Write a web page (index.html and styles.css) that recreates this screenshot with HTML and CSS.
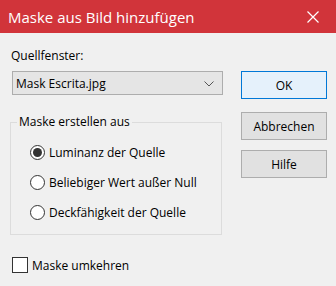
FILE: index.html
```html
<!DOCTYPE html>
<html lang="de">
<head>
<meta charset="utf-8">
<title>Maske aus Bild hinzufügen</title>
<link rel="stylesheet" href="styles.css">
</head>
<body>
<div class="dialog">
  <div class="titlebar">
    <span class="title">Maske aus Bild hinzufügen</span>
    <span class="close">
      <svg width="12" height="12" viewBox="0 0 12 12"><path d="M0.5 0.5 L11.5 11.5 M11.5 0.5 L0.5 11.5" stroke="#fff" stroke-width="1.2" fill="none"/></svg>
    </span>
  </div>
  <div class="main">
    <div class="left">
      <div class="label">Quellfenster:</div>
      <div class="select">
        <span>Mask Escrita.jpg</span>
        <svg class="chev" width="10" height="6" viewBox="0 0 10 6"><path d="M0.5 0.5 L5 5 L9.5 0.5" stroke="#555" stroke-width="1" fill="none"/></svg>
      </div>
      <fieldset class="group">
        <legend>Maske erstellen aus</legend>
        <div class="radio-row"><span class="radio checked"></span><span>Luminanz der Quelle</span></div>
        <div class="radio-row"><span class="radio"></span><span>Beliebiger Wert außer Null</span></div>
        <div class="radio-row"><span class="radio"></span><span>Deckfähigkeit der Quelle</span></div>
      </fieldset>
      <div class="check-row"><span class="checkbox"></span><span>Maske umkehren</span></div>
    </div>
    <div class="right">
      <div class="btn default">OK</div>
      <div class="btn b2">Abbrechen</div>
      <div class="btn b3">Hilfe</div>
    </div>
  </div>
</div>
</body>
</html>
```
FILE: styles.css
```css
html, body {
  margin: 0;
  padding: 0;
}
body {
  width: 336px;
  height: 286px;
  background: #f0f0f0;
  font-family: "Segoe UI", "Open Sans", "Noto Sans", sans-serif;
  font-size: 12px;
  color: #000;
  overflow: hidden;
}
.titlebar {
  height: 33px;
  background: #d1343a;
  color: #fff;
  display: flex;
  align-items: center;
  justify-content: space-between;
  padding-left: 8px;
}
.title {
  font-size: 15px;
  line-height: 20px;
}
.close {
  width: 46px;
  height: 33px;
  display: flex;
  align-items: center;
  justify-content: center;
}
.main {
  display: flex;
  padding: 15px 9px 0 10px;
}
.left {
  width: 213px;
}
.label {
  line-height: 16px;
  padding-left: 1px;
}
.select {
  margin: 7px 0 0 2px;
  width: 211px;
  height: 24px;
  box-sizing: border-box;
  border: 1px solid #adadad;
  background: #e5e5e5;
  display: flex;
  align-items: center;
  justify-content: space-between;
  padding: 0 8px 0 3px;
}
.chev {
  margin-top: 1px;
}
.group {
  margin: 19px 0 0 0;
  padding: 7px 0 7px 6px;
  border: 1px solid #dcdcdc;
  width: 212px;
  box-sizing: border-box;
}
.group legend {
  padding: 0 2px;
  line-height: 16px;
}
.radio-row {
  display: flex;
  align-items: center;
  height: 30px;
  padding-left: 13px;
  gap: 4px;
}
.radio {
  width: 15px;
  height: 15px;
  box-sizing: border-box;
  border: 1px solid #333;
  border-radius: 50%;
  background: #fff;
  display: flex;
  align-items: center;
  justify-content: center;
}
.radio.checked::after {
  content: "";
  width: 9px;
  height: 9px;
  border-radius: 50%;
  background: #333;
}
.check-row {
  display: flex;
  align-items: center;
  margin: 22px 0 0 2px;
  gap: 4px;
  height: 16px;
}
.checkbox {
  width: 16px;
  height: 16px;
  box-sizing: border-box;
  border: 1px solid #333;
  background: #fff;
}
.right {
  margin-left: 18px;
  width: 86px;
  padding-top: 23px;
}
.btn {
  height: 28px;
  box-sizing: border-box;
  border: 1px solid #adadad;
  background: #e1e1e1;
  display: flex;
  align-items: center;
  justify-content: center;
}
.btn.default {
  border-color: #0078d7;
  background: #e5f1fb;
}
.btn.b2 {
  margin-top: 13px;
}
.btn.b3 {
  margin-top: 10px;
}
```
